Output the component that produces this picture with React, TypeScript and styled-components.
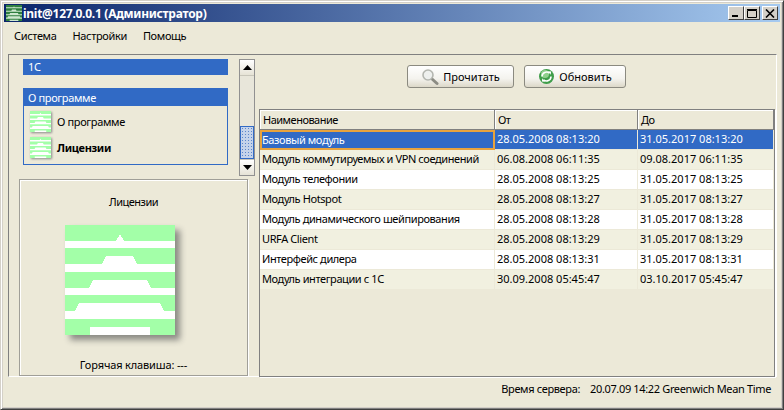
import styled, { createGlobalStyle } from 'styled-components'

const GlobalStyle = createGlobalStyle`
  html, body {
    margin: 0;
    padding: 0;
    background: #ece9d8;
  }
  * {
    box-sizing: border-box;
  }
`

const rows = [
  ['Базовый модуль', '28.05.2008 08:13:20', '31.05.2017 08:13:20'],
  ['Модуль коммутируемых и VPN соединений', '06.08.2008 06:11:35', '09.08.2017 06:11:35'],
  ['Модуль телефонии', '28.05.2008 08:13:25', '31.05.2017 08:13:25'],
  ['Модуль Hotspot', '28.05.2008 08:13:27', '31.05.2017 08:13:27'],
  ['Модуль динамического шейпирования', '28.05.2008 08:13:28', '31.05.2017 08:13:28'],
  ['URFA Client', '28.05.2008 08:13:29', '31.05.2017 08:13:29'],
  ['Интерфейс дилера', '28.05.2008 08:13:31', '31.05.2017 08:13:31'],
  ['Модуль интеграции с 1С', '30.09.2008 05:45:47', '03.10.2017 05:45:47'],
]

function Pyramid({ size, fill, stripe }: { size: number; fill: string; stripe: string }) {
  return (
    <svg width={size} height={size} viewBox="0 0 110 110" shapeRendering={size > 50 ? 'crispEdges' : undefined}>
      <rect width="110" height="110" fill={fill} />
      <path
        fill={stripe}
        d="M0 16H51L55 9L59 16H110V23H0Z M0 39H37L41 31H68L72 39H110V47H0Z M0 63H24L28 55H82L86 63H110V70H0Z M0 86H10L14 78H95L99 86H110V94H0Z M25 102H85V110H25Z"
      />
    </svg>
  )
}

export default function App() {
  return (
    <Frame>
      <GlobalStyle />
      <TitleBar>
        <Pyramid size={16} fill="#2f7f3f" stripe="#cfe8d0" />
        <TitleText>init@127.0.0.1 (Администратор)</TitleText>
        <WindowButtons>
          <WindowButton>
            <svg width="10" height="9" viewBox="0 0 10 9"><rect x="1" y="6" width="6" height="2" fill="#000" /></svg>
          </WindowButton>
          <WindowButton>
            <svg width="10" height="9" viewBox="0 0 10 9"><path d="M0.5 1.5H9.5V8.5H0.5Z M0 0.5H10" fill="none" stroke="#000" /></svg>
          </WindowButton>
          <CloseButton>
            <svg width="10" height="9" viewBox="0 0 10 9"><path d="M1 0.5L9 8.5M9 0.5L1 8.5" stroke="#000" strokeWidth="1.6" /></svg>
          </CloseButton>
        </WindowButtons>
      </TitleBar>

      <MenuBar>
        <MenuItem>Система</MenuItem>
        <MenuItem>Настройки</MenuItem>
        <MenuItem>Помощь</MenuItem>
      </MenuBar>

      <Body>
        <LeftColumn>
          <TreeRow>
            <TreeContent>
              <GroupHeader>1С</GroupHeader>
              <Group>
                <GroupHeader>О программе</GroupHeader>
                <GroupItems>
                  <GroupItem>
                    <SmallIcon><Pyramid size={21} fill="#a3ffa8" stripe="#ffffff" /></SmallIcon>
                    <span>О программе</span>
                  </GroupItem>
                  <GroupItem $bold>
                    <SmallIcon><Pyramid size={21} fill="#a3ffa8" stripe="#ffffff" /></SmallIcon>
                    <span>Лицензии</span>
                  </GroupItem>
                </GroupItems>
              </Group>
            </TreeContent>
            <ScrollBar>
              <ScrollButton>
                <svg width="9" height="5" viewBox="0 0 9 5"><path d="M4.5 0L9 5H0Z" fill="#000" /></svg>
              </ScrollButton>
              <ScrollTrack>
                <ScrollThumb />
              </ScrollTrack>
              <ScrollButton>
                <svg width="9" height="5" viewBox="0 0 9 5"><path d="M0 0H9L4.5 5Z" fill="#000" /></svg>
              </ScrollButton>
            </ScrollBar>
          </TreeRow>

          <Preview>
            <PreviewTitle>Лицензии</PreviewTitle>
            <BigIcon><Pyramid size={110} fill="#a3ffa8" stripe="#ffffff" /></BigIcon>
            <Hotkey>Горячая клавиша: ---</Hotkey>
          </Preview>
        </LeftColumn>

        <RightColumn>
          <Toolbar>
            <ToolButton $width={107}>
              <svg width="18" height="18" viewBox="0 0 18 18">
                <path d="M10.5 10.5L16 15.5" stroke="#8c8c84" strokeWidth="3" strokeLinecap="round" />
                <circle cx="7" cy="7" r="5" fill="#eef0ee" stroke="#b4b6b0" strokeWidth="1.6" />
              </svg>
              Прочитать
            </ToolButton>
            <ToolButton $width={102}>
              <svg width="17" height="17" viewBox="0 0 17 17">
                <circle cx="8.5" cy="8.5" r="7.5" fill="#3f9d4a" />
                <circle cx="7" cy="6" r="4" fill="#8fd08c" />
                <path d="M4 8.5A4.5 4.5 0 0 1 11.5 5.2" fill="none" stroke="#fff" strokeWidth="1.6" />
                <path d="M13 8.5A4.5 4.5 0 0 1 5.5 11.8" fill="none" stroke="#fff" strokeWidth="1.6" />
                <path d="M10 3.2L13.2 3.6L12.6 6.8Z M7 13.8L3.8 13.4L4.4 10.2Z" fill="#fff" />
              </svg>
              Обновить
            </ToolButton>
          </Toolbar>

          <Table>
            <HeaderRow>
              <HeaderCell>Наименование</HeaderCell>
              <HeaderCell>От</HeaderCell>
              <HeaderCell>До</HeaderCell>
            </HeaderRow>
            {rows.map((row, i) => (
              <Row key={row[0]} $selected={i === 0} $alt={i % 2 === 1}>
                <Cell $focused={i === 0}>{row[0]}</Cell>
                <DateCell>{row[1]}</DateCell>
                <DateCell>{row[2]}</DateCell>
              </Row>
            ))}
          </Table>
        </RightColumn>
      </Body>

      <StatusBar>
        <span>Время сервера:</span>
        <span>20.07.09 14:22 Greenwich Mean Time</span>
      </StatusBar>
    </Frame>
  )
}

const Frame = styled.div`
  width: 784px;
  height: 410px;
  display: flex;
  flex-direction: column;
  padding: 3px;
  background: #ece9d8;
  border: 1px solid;
  border-color: #d4d0c8 #404040 #404040 #d4d0c8;
  box-shadow: inset 1px 1px 0 #fff, inset -1px -1px 0 #808080, inset 2px 2px 0 #d4d0c8, inset -2px -2px 0 #d4d0c8;
  font-family: 'Noto Sans', sans-serif;
  font-size: 11px;
  letter-spacing: -0.35px;
  color: #000;
  overflow: hidden;
`

const TitleBar = styled.div`
  height: 18px;
  flex: none;
  display: flex;
  align-items: center;
  gap: 1px;
  padding: 0 2px;
  background: linear-gradient(90deg, #0a246a, #a6caf0);
`

const TitleText = styled.div`
  color: #fff;
  font-size: 12px;
  font-weight: 700;
  letter-spacing: -0.27px;
  white-space: nowrap;
`

const WindowButtons = styled.div`
  margin-left: auto;
  display: flex;
`

const WindowButton = styled.div`
  width: 16px;
  height: 14px;
  display: flex;
  align-items: center;
  justify-content: center;
  background: #d4d0c8;
  border: 1px solid;
  border-color: #fff #404040 #404040 #fff;
`

const CloseButton = styled(WindowButton)`
  margin-left: 2px;
`

const MenuBar = styled.div`
  height: 28px;
  flex: none;
  display: flex;
  align-items: center;
  gap: 16px;
  padding: 0 0 1px 10px;
`

const MenuItem = styled.div``

const Body = styled.div`
  height: 323px;
  flex: none;
  margin: 4px 3px 0 4px;
  display: flex;
  border: 1px solid;
  border-color: #808080 #fff #fff #808080;
`

const LeftColumn = styled.div`
  width: 250px;
  flex: none;
  display: flex;
  flex-direction: column;
  padding-top: 4px;
`

const TreeRow = styled.div`
  height: 117px;
  flex: none;
  display: flex;
  padding-left: 14px;
`

const TreeContent = styled.div`
  width: 205px;
  flex: none;
  margin-right: 11px;
  display: flex;
  flex-direction: column;
  gap: 13px;
`

const GroupHeader = styled.div`
  height: 16px;
  display: flex;
  align-items: center;
  padding: 0 0 1px 5px;
  background: #316ac5;
  color: #fff;
`

const Group = styled.div`
  height: 77px;
  display: flex;
  flex-direction: column;
  border: 1px solid #316ac5;

  ${GroupHeader} {
    height: 17px;
    margin: 0 -1px;
  }
`

const GroupItems = styled.div`
  display: flex;
  flex-direction: column;
  gap: 5px;
  padding: 5px 0 0 6px;
`

const GroupItem = styled.div<{ $bold?: boolean }>`
  height: 21px;
  display: flex;
  align-items: center;
  gap: 6px;
  font-weight: ${(p) => (p.$bold ? 700 : 400)};
`

const SmallIcon = styled.div`
  height: 21px;
  filter: drop-shadow(1px 1px 1px #8a8a8a);
`

const ScrollBar = styled.div`
  width: 16px;
  flex: none;
  display: flex;
  flex-direction: column;
  border: 1px solid #919191;
`

const ScrollButton = styled.div`
  height: 15px;
  flex: none;
  display: flex;
  align-items: center;
  justify-content: center;
  background: linear-gradient(180deg, #fff, #e6e3d6);
`

const ScrollTrack = styled.div`
  flex: 1;
  display: flex;
  flex-direction: column;
  justify-content: flex-end;
  background: #e8e6da;
  border: solid #c8c6ba;
  border-width: 1px 0;
`

const ScrollThumb = styled.div`
  height: 33px;
  border: 1px solid #316ac5;
  background-color: #c5d3ea;
  background-image: radial-gradient(#5b86cc 0.7px, transparent 0.9px);
  background-size: 3px 3px;
`

const Preview = styled.div`
  width: 229px;
  height: 197px;
  flex: none;
  margin: 3px 0 0 10px;
  display: flex;
  flex-direction: column;
  align-items: center;
  border: 1px solid #a09f98;
  box-shadow: inset 1px 1px 0 #fff, 1px 1px 0 #fff;
`

const PreviewTitle = styled.div`
  margin-top: 15px;
  line-height: 13px;
  letter-spacing: -0.5px;
`

const BigIcon = styled.div`
  height: 110px;
  margin: 17px 0 0 45px;
  align-self: flex-start;
  filter: drop-shadow(5px 5px 3px #8a8a84);
`

const Hotkey = styled.div`
  margin-top: 23px;
  line-height: 13px;
  letter-spacing: -0.15px;
`

const RightColumn = styled.div`
  flex: 1;
  display: flex;
  flex-direction: column;
  min-width: 0;
`

const Toolbar = styled.div`
  height: 23px;
  flex: none;
  margin-top: 10px;
  padding-left: 148px;
  display: flex;
  gap: 10px;
`

const ToolButton = styled.div<{ $width: number }>`
  width: ${(p) => p.$width}px;
  display: flex;
  align-items: center;
  justify-content: center;
  gap: 4px;
  border: 1px solid #8b8a80;
  border-radius: 3px;
  letter-spacing: 0;
  background: linear-gradient(180deg, #ffffff, #f4f3ee 60%, #dcd8c8);
`

const Table = styled.div`
  width: 516px;
  flex: 1;
  margin-top: 21px;
  margin-bottom: -1px;
  border: 1px solid #808080;
  box-shadow: 1px 1px 0 #fff;
`

const HeaderRow = styled.div`
  height: 20px;
  display: grid;
  grid-template-columns: 235px 143px 136px;
  border-bottom: 1px solid #808080;
`

const HeaderCell = styled.div`
  display: flex;
  align-items: center;
  padding-left: 3px;
  letter-spacing: -0.5px;
  border-right: 1px solid #808080;
  box-shadow: inset 1px 1px 0 #fff;
`

const Row = styled.div<{ $selected?: boolean; $alt?: boolean }>`
  height: 20px;
  display: grid;
  grid-template-columns: 235px 143px 136px;
  background: ${(p) => (p.$selected ? '#316ac5' : p.$alt ? '#f1f0e0' : '#fff')};
  color: ${(p) => (p.$selected ? '#fff' : '#000')};
`

const Cell = styled.div<{ $focused?: boolean }>`
  display: flex;
  align-items: center;
  padding: 0 0 2px 2px;
  white-space: nowrap;
  letter-spacing: -0.4px;
  border-right: 1px solid #ece9d8;
  border-bottom: 1px solid #ece9d8;
  ${(p) => p.$focused && 'border: 1px solid #e8a33d; outline: 1px solid #e8a33d; outline-offset: -2px; padding-left: 1px; padding-bottom: 1px;'}
`

const DateCell = styled(Cell)`
  letter-spacing: 0;
`

const StatusBar = styled.div`
  flex: 1;
  display: flex;
  align-items: center;
  gap: 10px;
  padding: 0 9px 6px 0;
  justify-content: flex-end;
`
